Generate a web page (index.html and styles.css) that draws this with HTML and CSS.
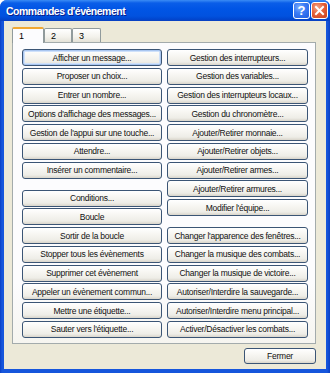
FILE: index.html
```html
<!DOCTYPE html>
<html lang="fr">
<head>
<meta charset="utf-8">
<title>Commandes d'évènement</title>
<link rel="stylesheet" href="styles.css">
</head>
<body>
<div class="window">
  <div class="titlebar">
    <span class="title">Commandes d'évènement</span>
    <div class="controls">
      <span class="ctl help">?</span>
      <span class="ctl close"><svg width="11" height="11" viewBox="0 0 11 11"><path d="M2 2 L9 9 M9 2 L2 9" stroke="#fff" stroke-width="2" stroke-linecap="square"/></svg></span>
    </div>
  </div>
  <div class="client">
    <div class="tabs">
      <span class="tab active">1</span>
      <span class="tab t2">2</span>
      <span class="tab t3">3</span>
    </div>
    <div class="panel">
      <div class="col">
        <button class="btn focus">Afficher un message...</button>
        <button class="btn">Proposer un choix...</button>
        <button class="btn">Entrer un nombre...</button>
        <button class="btn">Options d'affichage des messages...</button>
        <button class="btn">Gestion de l'appui sur une touche...</button>
        <button class="btn">Attendre...</button>
        <button class="btn">Insérer un commentaire...</button>
        <button class="btn sep">Conditions...</button>
        <button class="btn">Boucle</button>
        <button class="btn">Sortir de la boucle</button>
        <button class="btn">Stopper tous les évènements</button>
        <button class="btn">Supprimer cet évènement</button>
        <button class="btn">Appeler un évènement commun...</button>
        <button class="btn">Mettre une étiquette...</button>
        <button class="btn">Sauter vers l'étiquette...</button>
      </div>
      <div class="col">
        <button class="btn">Gestion des interrupteurs...</button>
        <button class="btn">Gestion des variables...</button>
        <button class="btn">Gestion des interrupteurs locaux...</button>
        <button class="btn">Gestion du chronomètre...</button>
        <button class="btn">Ajouter/Retirer monnaie...</button>
        <button class="btn">Ajouter/Retirer objets...</button>
        <button class="btn">Ajouter/Retirer armes...</button>
        <button class="btn">Ajouter/Retirer armures...</button>
        <button class="btn">Modifier l'équipe...</button>
        <button class="btn sep">Changer l'apparence des fenêtres...</button>
        <button class="btn">Changer la musique des combats...</button>
        <button class="btn">Changer la musique de victoire...</button>
        <button class="btn">Autoriser/Interdire la sauvegarde...</button>
        <button class="btn">Autoriser/Interdire menu principal...</button>
        <button class="btn">Activer/Désactiver les combats...</button>
      </div>
    </div>
    <button class="btn close-btn">Fermer</button>
  </div>
</div>
</body>
</html>
```

FILE: styles.css
```css
* { box-sizing: border-box; }
html, body { margin: 0; padding: 0; background: #ffffff; }
body { width: 330px; height: 373px; overflow: hidden; }

.window {
  width: 330px;
  height: 373px;
  display: flex;
  flex-direction: column;
  border-radius: 7px 7px 0 0;
  overflow: hidden;
  background: linear-gradient(to right, #0A3FC4 0, #1656DC 2px, #1656DC 327px, #0A3FC4 330px);
}

.titlebar {
  height: 21px;
  flex: none;
  display: flex;
  align-items: center;
  justify-content: space-between;
  padding: 0 2px 0 6px;
  background: linear-gradient(to bottom, #3B8CF5 0px, #0A5EE8 3px, #0055E5 9px, #0152DF 16px, #0047D0 19px, #0A3FC0 21px);
}

.title {
  font-family: "Liberation Sans", Arial, sans-serif;
  font-weight: bold;
  font-size: 10.5px;
  letter-spacing: -0.5px;
  color: #ffffff;
  text-shadow: 1px 1px 0 #0A1E8A;
  padding-top: 1px;
}

.controls { display: flex; gap: 1px; }

.ctl {
  width: 17px;
  height: 17px;
  border: 1px solid #ffffff;
  border-radius: 3px;
  display: flex;
  align-items: center;
  justify-content: center;
  color: #ffffff;
  font-family: "Liberation Sans", Arial, sans-serif;
  font-weight: bold;
  font-size: 13px;
}
.help { background: radial-gradient(circle at 35% 30%, #7FB0FF 0, #3D7DF5 40%, #1F5BE0 100%); }
.close { background: radial-gradient(circle at 35% 30%, #F5A68A 0, #E4603A 45%, #C8401C 100%); }

.client {
  flex: 1;
  display: flex;
  flex-direction: column;
  margin: 0 4px 4px 4px;
  background: #ECE9D8;
  padding: 6px 10px 5px 8px;
}

.tabs {
  display: flex;
  align-items: flex-end;
  height: 16px;
  flex: none;
  position: relative;
  z-index: 2;
}

.tab {
  font-family: "Liberation Sans", Arial, sans-serif;
  font-size: 9px;
  color: #000;
  height: 14px;
  padding: 2px 0 0 6px;
  border: 1px solid #919B9C;
  border-bottom: none;
  border-radius: 2px 2px 0 0;
  background: linear-gradient(#FFFFFF, #F3F2EC 60%, #E4E2D8);
  margin-bottom: 1px;
}
.tab.active {
  width: 32px;
  height: 16px;
  margin-bottom: 0;
  background: #FCFCFE;
  border-top: 2px solid #F1A832;
  padding-top: 2px;
}
.tab.t2 { width: 28px; }
.tab.t3 { width: 29px; }

.panel {
  flex: none;
  height: 302px;
  margin-top: -1px;
  border: 1px solid #A3ABAC;
  background: linear-gradient(#FCFCFE 80%, #F6F5F0);
  padding: 6px 7px 0 9px;
  display: grid;
  grid-template-columns: 140px 141px;
  column-gap: 5px;
  align-content: start;
}

.col {
  display: flex;
  flex-direction: column;
  gap: 1.75px;
}

.btn {
  height: 17px;
  margin: 0;
  padding: 0 2px;
  border: 1px solid #3B5575;
  border-radius: 3px;
  background: linear-gradient(#FFFFFF 0%, #F7F6F2 40%, #EEEDE7 80%, #D9D5CB 100%);
  font-family: "Liberation Sans", Arial, sans-serif;
  font-size: 8.5px;
  letter-spacing: -0.25px;
  color: #111;
  white-space: nowrap;
  overflow: hidden;
  text-align: center;
}
.btn.focus {
  box-shadow: inset 0 0 0 1px #A9C6F0, inset 0 0 0 2px #CFE1FA;
}
.btn.sep { margin-top: 9.25px; }

.close-btn {
  width: 72px;
  height: 16px;
  align-self: flex-end;
  margin-top: 4px;
}
```
